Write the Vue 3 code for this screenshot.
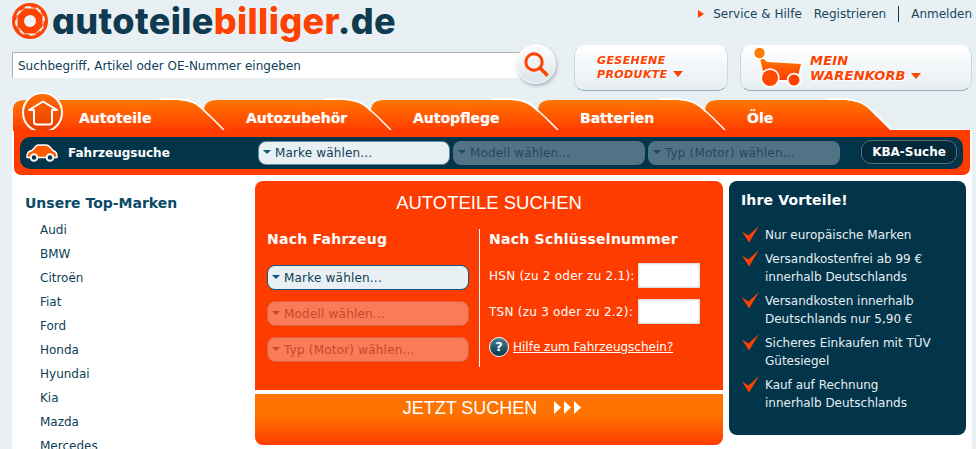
<script setup>
const tabs = ['Autoteile', 'Autozubehör', 'Autopflege', 'Batterien', 'Öle']
const brands = ['Audi', 'BMW', 'Citroën', 'Fiat', 'Ford', 'Honda', 'Hyundai', 'Kia', 'Mazda', 'Mercedes']
const perks = [
  ['Nur europäische Marken'],
  ['Versandkostenfrei ab 99 €', 'innerhalb Deutschlands'],
  ['Versandkosten innerhalb', 'Deutschlands nur 5,90 €'],
  ['Sicheres Einkaufen mit TÜV', 'Gütesiegel'],
  ['Kauf auf Rechnung', 'innerhalb Deutschlands']
]
</script>

<template>
  <div class="page">
    <!-- top row -->
    <div class="top">
      <div class="logo">
        <svg class="logo-icon" width="36" height="36" viewBox="0 0 36 36">
          <circle cx="18" cy="18" r="16.5" fill="#e8f0f4" stroke="#ff4200" stroke-width="3" />
          <circle cx="18" cy="18" r="14.6" fill="none" stroke="#ff4200" stroke-width="1.6" stroke-dasharray="5.5 6" />
          <polygon points="13,6.5 23,6.5 29.5,13 29.5,23 23,29.5 13,29.5 6.5,23 6.5,13" fill="#ff4200" stroke="#ff4200" stroke-width="2" stroke-linejoin="round" />
          <circle cx="18" cy="18" r="6" fill="#eef3f6" />
        </svg>
        <span class="logo-text">autoteile<b>billiger</b>.de</span>
      </div>
      <div class="links">
        <span class="marker"></span>
        <a class="service">Service &amp; Hilfe</a>
        <a>Registrieren</a>
        <span class="sep"></span>
        <a>Anmelden</a>
      </div>
    </div>

    <!-- search and cards -->
    <div class="tools">
      <div class="search">Suchbegriff, Artikel oder OE-Nummer eingeben</div>
      <div class="search-btn">
        <svg width="38" height="38" viewBox="0 0 38 38">
          <circle cx="17" cy="17" r="8.2" fill="none" stroke="#ff4200" stroke-width="3" />
          <line x1="23" y1="23" x2="29.5" y2="29.5" stroke="#ff4200" stroke-width="3.6" stroke-linecap="round" />
        </svg>
      </div>
      <div class="card seen">
        <div class="card-text">GESEHENE<br />PRODUKTE<i class="card-arrow"></i></div>
      </div>
      <div class="card basket">
        <svg class="cart" width="52" height="44" viewBox="0 0 52 44">
          <defs>
            <linearGradient id="cartfill" x1="0" y1="0" x2="0" y2="1">
              <stop offset="0" stop-color="#ff8000" />
              <stop offset="1" stop-color="#ff3c00" />
            </linearGradient>
          </defs>
          <g stroke="#fff" stroke-width="3.5" paint-order="stroke" stroke-linejoin="round">
            <path d="M6 8 L14 16 L48 18 L44 34 L12 34 Z" fill="url(#cartfill)" />
            <circle cx="6.500" cy="7" r="5.200" fill="#ff7a00" />
            <circle cx="17" cy="32" r="8" fill="#ff4a00" />
            <circle cx="41" cy="34" r="5.500" fill="#ff4200" />
          </g>
        </svg>
        <div class="card-text">MEIN<br />WARENKORB<i class="card-arrow"></i></div>
      </div>
    </div>

    <!-- tabs -->
    <div class="tabs">
      <div v-for="(tab, i) in tabs" :key="tab" class="tab" :class="{ first: i === 0 }" :style="{ zIndex: 10 - i }">
        <svg class="tab-bg" :width="i === 0 ? 212 : 189" height="33" :viewBox="i === 0 ? '0 0 212 33' : '0 0 189 33'" preserveAspectRatio="none">
          <defs>
            <linearGradient :id="'tabfill' + i" x1="0" y1="0" x2="0" y2="1">
              <stop offset="0" stop-color="#ff7600" />
              <stop offset="1" stop-color="#ff3c00" />
            </linearGradient>
          </defs>
          <path v-if="i === 0" d="M0 33 V12 Q0 2 12 2 H160 C186 2 188 12 197 20 L210 33 Z" :fill="'url(#tabfill' + i + ')'" />
          <path v-if="i === 0" d="M146 1 H160 C186 1 188 11 198 19 L211 32" fill="none" stroke="#fff" stroke-width="1.500" />
          <path v-if="i !== 0" d="M1 33 V13 Q1 2 14 2 H137 C161 2 165 12 174 20 L187 33 Z" :fill="'url(#tabfill' + i + ')'" />
          <path v-if="i !== 0" d="M122 1 H137 C161 1 165 11 175 19 L188 32" fill="none" stroke="#fff" stroke-width="1.500" />
        </svg>
        <span class="tab-label">{{ tab }}</span>
        <div v-if="i === 0" class="home">
          <svg width="30" height="26" viewBox="0 0 30 26">
            <path d="M1 10 L15 1.500 L29 10 H24 V22 Q24 24.500 21 24.500 H9 Q6 24.500 6 22 V10 Z" fill="none" stroke="#fff" stroke-width="2" stroke-linejoin="round" />
          </svg>
        </div>
      </div>
    </div>

    <div class="content">
      <!-- vehicle bar -->
      <div class="navbox">
        <div class="navbar">
          <svg class="car" width="32" height="18" viewBox="0 0 32 18">
            <path d="M1 12 Q1 7.500 6 6.500 L10 2 Q11 1 13 1 H20 Q22 1 24 3 L27 6.500 Q31 8 31 12 V13.500 H1 Z" fill="#ff5a00" stroke="#fff" stroke-width="1.400" stroke-linejoin="round" />
            <circle cx="8" cy="13.500" r="3.300" fill="#03354a" stroke="#fff" stroke-width="2" />
            <circle cx="24" cy="13.500" r="3.300" fill="#03354a" stroke="#fff" stroke-width="2" />
          </svg>
          <span class="bar-title">Fahrzeugsuche</span>
          <div class="bar-select active"><i></i>Marke wählen...</div>
          <div class="bar-select"><i></i>Modell wählen...</div>
          <div class="bar-select"><i></i>Typ (Motor) wählen...</div>
          <div class="kba">KBA-Suche</div>
        </div>
      </div>

      <div class="columns">
        <!-- brands -->
        <div class="brands">
          <h3>Unsere Top-Marken</h3>
          <ul>
            <li v-for="b in brands" :key="b">{{ b }}</li>
          </ul>
        </div>

        <!-- search panel -->
        <div class="finder">
          <div class="finder-top">
            <h2>AUTOTEILE SUCHEN</h2>
            <div class="finder-cols">
              <div class="by-car">
                <h4>Nach Fahrzeug</h4>
                <div class="pick on"><i></i>Marke wählen...</div>
                <div class="pick"><i></i>Modell wählen...</div>
                <div class="pick"><i></i>Typ (Motor) wählen...</div>
              </div>
              <div class="by-key">
                <h4>Nach Schlüsselnummer</h4>
                <div class="key-row first"><span>HSN (zu 2 oder zu 2.1):</span><div class="key-input"></div></div>
                <div class="key-row"><span>TSN (zu 3 oder zu 2.2):</span><div class="key-input"></div></div>
                <div class="help">
                  <span class="help-icon">?</span>
                  <a>Hilfe zum Fahrzeugschein?</a>
                </div>
              </div>
            </div>
          </div>
          <div class="finder-go">
            <span>JETZT SUCHEN</span>
            <svg width="28" height="13" viewBox="0 0 28 13">
              <path d="M0 0 L7 6.500 L0 13 Z M10 0 L17 6.500 L10 13 Z M20 0 L27 6.500 L20 13 Z" fill="#fff" />
            </svg>
          </div>
        </div>

        <!-- perks -->
        <div class="perks">
          <h3>Ihre Vorteile!</h3>
          <ul>
            <li v-for="(p, i) in perks" :key="i">
              <svg width="17" height="17" viewBox="0 0 17 17">
                <path d="M0 5.500 L6.500 9.500 L17 0 L7 16.500 Z" fill="#ff4200" />
              </svg>
              <div>
                <div v-for="line in p" :key="line">{{ line }}</div>
              </div>
            </li>
          </ul>
        </div>
      </div>
    </div>
  </div>
</template>

<style>
body {
  background: #e8f0f4;
}
</style>

<style scoped>
.page {
  width: 976px;
  height: 449px;
  overflow: hidden;
  background: #e8f0f4;
  font-family: "DejaVu Sans", Verdana, sans-serif;
  font-size: 12px;
  color: #0e3f55;
}

.top {
  height: 45px;
  display: flex;
  justify-content: space-between;
  padding: 0 4px 0 12px;
}

.logo {
  display: flex;
  align-items: flex-start;
  padding-top: 3px;
}

.logo-text {
  font-family: Inter, "Open Sans", sans-serif;
  font-feature-settings: "cv11";
  font-weight: 800;
  font-size: 36px;
  line-height: 36px;
  letter-spacing: 0.35px;
  margin-left: 4px;
  color: #0f3a4f;
}

.logo-text b {
  font-weight: 800;
  color: #ff4200;
}

.links {
  display: flex;
  align-items: center;
  height: 27px;
}

.links a {
  color: #18465c;
}

.marker {
  width: 0;
  height: 0;
  border-left: 6px solid #ff4200;
  border-top: 4px solid transparent;
  border-bottom: 4px solid transparent;
  margin-right: 9px;
}

.service {
  margin-right: 12px;
}

.sep {
  width: 1px;
  height: 16px;
  background: #0f3a4f;
  margin: 0 12px;
}

.tools {
  height: 46px;
  display: flex;
  align-items: flex-start;
  padding-left: 12px;
}

.search {
  width: 510px;
  height: 26px;
  margin-top: 7px;
  padding-left: 5px;
  box-sizing: border-box;
  line-height: 26px;
  background: #fff;
  border-top: 1px solid #a9b1b5;
  border-left: 1px solid #a9b1b5;
  color: #0e4058;
}

.search-btn {
  width: 38px;
  height: 38px;
  margin-left: -5px;
  position: relative;
  border-radius: 50%;
  background: linear-gradient(#fff, #dbe4e8);
  box-shadow: 0 0 0 1px #fff, 1px 2px 4px rgba(40, 70, 90, 0.55);
}

.card {
  height: 46px;
  box-sizing: border-box;
  display: flex;
  align-items: center;
  border-radius: 10px;
  background: linear-gradient(#fff, #e6eef2);
  border: 1px solid #8fb0bf;
  border-top-color: #fff;
  border-left-color: #c9dae2;
  border-right-color: #c9dae2;
}

.seen {
  width: 154px;
  margin-left: 19px;
  padding-left: 22px;
}

.basket {
  width: 232px;
  margin-left: 12px;
  padding-left: 12px;
}

.cart {
  margin-right: 5px;
  flex: none;
}

.card-text {
  font-weight: bold;
  font-style: italic;
  font-size: 11px;
  line-height: 14px;
  letter-spacing: 0.4px;
  color: #ff4200;
  text-shadow: 1px 1px 0 #fff;
}

.basket .card-text {
  font-size: 13px;
  line-height: 15px;
  letter-spacing: 0.2px;
}

.card-arrow {
  display: inline-block;
  width: 0;
  height: 0;
  margin-left: 5px;
  vertical-align: 1px;
  border-top: 6px solid #ff4200;
  border-left: 5.5px solid transparent;
  border-right: 5.5px solid transparent;
}

.tabs {
  height: 31px;
  margin-top: 7px;
  display: flex;
  padding-left: 13px;
  position: relative;
  z-index: 2;
}

.tab {
  position: relative;
  width: 187px;
  height: 33px;
  margin-left: -20px;
}

.tab.first {
  width: 210px;
  margin-left: 0;
}

.tab-bg {
  position: absolute;
  left: 0;
  top: 0;
}

.tab-label {
  position: relative;
  display: block;
  padding: 11px 0 0 43px;
  font-weight: bold;
  font-size: 14px;
  line-height: 18px;
  color: #fff;
  text-shadow: 0 0 1px rgba(255, 255, 255, 0.5);
}

.tab.first .tab-label {
  padding-left: 66px;
}

.home {
  position: absolute;
  left: 9px;
  top: -6px;
  width: 41px;
  height: 41px;
  box-sizing: border-box;
  border: 2px solid #fff;
  border-radius: 50%;
  background: linear-gradient(#ff6a00, #e83c00);
  display: flex;
  align-items: center;
  justify-content: center;
}

.content {
  margin: 0 4px 0 12px;
  background: #fff;
  height: 320px;
  padding-top: 1px;
  position: relative;
}

.navbox {
  margin: 0 2px;
  height: 45px;
  box-sizing: border-box;
  padding: 7px 7px 6px 6px;
  background: #ff3c00;
  border-radius: 0 0 7px 7px;
  position: relative;
  z-index: 3;
}

.navbar {
  height: 32px;
  display: flex;
  align-items: center;
  background: #03354a;
  border-radius: 10px;
  padding-left: 6px;
}

.car {
  flex: none;
}

.bar-title {
  width: 190px;
  margin-left: 10px;
  font-weight: bold;
  color: #fff;
}

.bar-select {
  width: 192px;
  height: 24px;
  margin-right: 3px;
  box-sizing: border-box;
  border-radius: 8px;
  background: #527386;
  color: #1f4b60;
  line-height: 24px;
  padding-left: 5px;
  display: flex;
  align-items: center;
  letter-spacing: 0.15px;
}

.bar-select.active {
  background: #e8f0f4;
  color: #0e3f55;
  border: 1px solid #5f8ba0;
  padding-left: 4px;
}

.bar-select i,
.pick i {
  display: block;
  width: 0;
  height: 0;
  margin: 0 4px 2px 0;
  border-top: 4px solid #0a5a7a;
  border-left: 4px solid transparent;
  border-right: 4px solid transparent;
}

.bar-select:not(.active) i {
  border-top-color: #1f4b60;
}

.kba {
  width: 96px;
  height: 24px;
  margin-left: 18px;
  box-sizing: border-box;
  margin-top: -3px;
  border: 1px solid #58707e;
  border-radius: 10px;
  background: #03293a;
  color: #fff;
  font-weight: bold;
  text-align: center;
  line-height: 22px;
}

.columns {
  display: flex;
  align-items: flex-start;
  padding-top: 6px;
}

.brands {
  width: 243px;
  padding-left: 13px;
  box-sizing: border-box;
}

.brands h3 {
  margin: 0;
  padding-top: 12px;
  font-size: 14px;
  line-height: 20px;
  font-weight: bold;
  color: #0a4a66;
}

.brands ul {
  list-style: none;
  margin: 5px 0 0;
  padding: 0 0 0 15px;
}

.brands li {
  height: 24px;
  line-height: 24px;
}

.finder {
  width: 468px;
  flex: none;
}

.finder-top {
  height: 209px;
  box-sizing: border-box;
  background: #ff3c00;
  border-radius: 8px 8px 0 0;
  padding: 11px 12px 0;
  color: #fff;
}

.finder-top h2 {
  margin: 0;
  text-align: center;
  font-family: "Liberation Sans", Arial, sans-serif;
  font-weight: normal;
  font-size: 18.5px;
  line-height: 22px;
}

.finder-cols {
  display: flex;
  margin-top: 15px;
  height: 138px;
}

.finder-cols h4 {
  margin: 0;
  font-size: 14px;
  line-height: 20px;
  font-weight: bold;
  letter-spacing: 0.25px;
}

.by-car {
  width: 202px;
  padding-right: 10px;
  border-right: 1px solid #fff;
  flex: none;
}

.pick {
  height: 25px;
  margin-bottom: 11px;
  box-sizing: border-box;
  display: flex;
  align-items: center;
  padding-left: 4px;
  border-radius: 8px;
  border: 1px solid #d9603f;
  background: #f97b58;
  color: #c64a2a;
  letter-spacing: 0.2px;
}

.pick i {
  border-top-color: #c64a2a;
}

.pick.on {
  margin-top: 16px;
  background: #e8f0f4;
  border-color: #0a5a7a;
  color: #0e3f55;
}

.pick.on i {
  border-top-color: #0a5a7a;
}

.by-key {
  padding-left: 9px;
}

.key-row {
  height: 25px;
  margin-bottom: 11px;
  display: flex;
  align-items: center;
  justify-content: space-between;
  width: 211px;
  letter-spacing: 0.25px;
}

.key-row.first {
  margin-top: 14px;
}

.key-input {
  width: 62px;
  height: 25px;
  background: #fff;
  box-shadow: inset 0 0 3px rgba(60, 60, 60, 0.45);
}

.help {
  display: flex;
  align-items: center;
  margin-top: 13px;
  height: 20px;
}

.help a {
  margin-left: 4px;
  color: #fff;
  text-decoration: underline;
}

.help-icon {
  width: 20px;
  height: 20px;
  box-sizing: border-box;
  border: 1px solid #fff;
  border-radius: 50%;
  background: linear-gradient(#4c7f98, #03354a);
  color: #fff;
  font-weight: bold;
  font-size: 13px;
  line-height: 18px;
  text-align: center;
}

.finder-go {
  height: 51px;
  margin-top: 4px;
  box-sizing: border-box;
  background: linear-gradient(#ff7300 40%, #ff3c00);
  border-radius: 0 0 8px 8px;
  padding: 3px 0 0 7px;
  display: flex;
  justify-content: center;
  align-items: flex-start;
  gap: 17px;
  color: #fff;
  font-family: "Liberation Sans", Arial, sans-serif;
  font-size: 18px;
  line-height: 22px;
}

.finder-go svg {
  margin-top: 4px;
}

.perks {
  width: 237px;
  height: 254px;
  flex: none;
  margin-left: 6px;
  box-sizing: border-box;
  background: #03354a;
  border-radius: 8px;
  padding: 9px 12px 0;
  color: #fff;
}

.perks h3 {
  margin: 0;
  font-size: 14px;
  line-height: 20px;
  font-weight: bold;
  letter-spacing: 0.15px;
}

.perks ul {
  list-style: none;
  margin: 16px 0 0;
  padding: 0;
  display: flex;
  flex-direction: column;
  gap: 6px;
}

.perks li {
  display: flex;
  gap: 6px;
  line-height: 18px;
  color: #e6eef2;
}

.perks li svg {
  flex: none;
  margin: 0 0 0 1px;
}
</style>
